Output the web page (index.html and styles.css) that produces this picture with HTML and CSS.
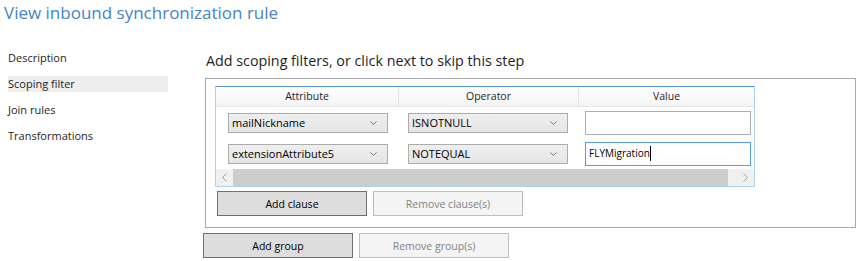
FILE: index.html
```html
<!DOCTYPE html>
<html lang="en">
<head>
  <meta charset="UTF-8">
  <title>View inbound synchronization rule</title>
  <link rel="stylesheet" href="styles.css">
</head>
<body>
  <h1 class="title">View inbound synchronization rule</h1>
  <div class="wizard">
    <ul class="steps">
      <li>Description</li>
      <li class="active">Scoping filter</li>
      <li>Join rules</li>
      <li>Transformations</li>
    </ul>
    <div class="page">
      <h2 class="page-heading">Add scoping filters, or click next to skip this step</h2>
      <div class="group-box">
        <div class="grid">
          <div class="grid-head">
            <div class="cell">Attribute</div>
            <div class="cell">Operator</div>
            <div class="cell">Value</div>
          </div>
          <div class="grid-row">
            <div class="cell cell-attr">
              <div class="combo"><span>mailNickname</span><svg width="7" height="4" viewBox="0 0 7 4"><polyline points="0.5,0.5 3.5,3.5 6.5,0.5" fill="none" stroke="#777" stroke-width="1"/></svg></div>
            </div>
            <div class="cell cell-op">
              <div class="combo"><span>ISNOTNULL</span><svg width="7" height="4" viewBox="0 0 7 4"><polyline points="0.5,0.5 3.5,3.5 6.5,0.5" fill="none" stroke="#777" stroke-width="1"/></svg></div>
            </div>
            <div class="cell cell-val">
              <div class="textbox"></div>
            </div>
          </div>
          <div class="grid-row">
            <div class="cell cell-attr">
              <div class="combo"><span>extensionAttribute5</span><svg width="7" height="4" viewBox="0 0 7 4"><polyline points="0.5,0.5 3.5,3.5 6.5,0.5" fill="none" stroke="#777" stroke-width="1"/></svg></div>
            </div>
            <div class="cell cell-op">
              <div class="combo"><span>NOTEQUAL</span><svg width="7" height="4" viewBox="0 0 7 4"><polyline points="0.5,0.5 3.5,3.5 6.5,0.5" fill="none" stroke="#777" stroke-width="1"/></svg></div>
            </div>
            <div class="cell cell-val">
              <div class="textbox focused"><span class="caret">FLYMigration</span></div>
            </div>
          </div>
          <div class="hscroll">
            <div class="scroll-btn"><svg width="5" height="9" viewBox="0 0 5 9"><polyline points="4.5,0.5 0.5,4.5 4.5,8.5" fill="none" stroke="#a0a0a0" stroke-width="1"/></svg></div>
            <div class="scroll-track"><div class="scroll-thumb"></div></div>
            <div class="scroll-btn"><svg width="5" height="9" viewBox="0 0 5 9"><polyline points="0.5,0.5 4.5,4.5 0.5,8.5" fill="none" stroke="#a0a0a0" stroke-width="1"/></svg></div>
          </div>
        </div>
        <div class="buttons">
          <button class="btn">Add clause</button>
          <button class="btn" disabled>Remove clause(s)</button>
        </div>
      </div>
      <div class="buttons outer-buttons">
        <button class="btn">Add group</button>
        <button class="btn" disabled>Remove group(s)</button>
      </div>
    </div>
  </div>
</body>
</html>
```

FILE: styles.css
```css
* {
  box-sizing: border-box;
}

body {
  margin: 0;
  font-family: "Open Sans", "Noto Sans", sans-serif;
  font-size: 11px;
  color: #1e1e1e;
  background: #fff;
}

.title {
  margin: 0;
  padding-left: 4px;
  font-size: 17px;
  font-weight: normal;
  line-height: 26px;
  color: #4783c5;
}

.wizard {
  display: flex;
  padding-top: 24px;
}

.steps {
  margin: 0;
  padding: 0 0 0 8px;
  width: 203px;
  flex-shrink: 0;
  list-style: none;
  display: flex;
  flex-direction: column;
  gap: 10px;
}

.steps li {
  width: 160px;
  height: 16px;
  line-height: 16px;
  font-size: 11px;
}

.steps li.active {
  background: #eeeeee;
}

.page {
  display: flex;
  flex-direction: column;
}

.page-heading {
  margin: 1px 0 7px 3px;
  font-size: 14.3px;
  font-weight: normal;
  line-height: 20px;
  color: #1e1e1e;
}

.group-box {
  margin-left: 2px;
  width: 651px;
  height: 150px;
  border: 1px solid #a9a9ad;
  padding: 7px 9px;
}

.grid {
  width: 540px;
  border: 1px solid #abd3ea;
  border-top-color: #5796d2;
}

.grid-head {
  display: flex;
  height: 20px;
  border-bottom: 1px solid #e6e6e6;
  background: linear-gradient(#ffffff, #f4f4f4);
  font-size: 10.5px;
}

.grid-head .cell {
  justify-content: center;
  border-right: 1px solid #e2e2e2;
  line-height: 19px;
}

.grid-head .cell:last-child {
  border-right: none;
}

.cell {
  display: flex;
  align-items: center;
}

.cell:nth-child(1) {
  width: 183px;
}

.cell:nth-child(2) {
  width: 180px;
}

.cell:nth-child(3) {
  flex: 1;
}

.grid-row {
  display: flex;
  height: 31px;
}

.cell-attr {
  padding-left: 12px;
}

.cell-op {
  padding-left: 9px;
}

.cell-val {
  padding-left: 6px;
}

.combo {
  width: 160px;
  height: 20px;
  border: 1px solid #acacac;
  background: linear-gradient(#efefef, #e5e5e5);
  display: flex;
  align-items: center;
  justify-content: space-between;
  padding: 0 10px 0 3px;
  color: #000;
}

.textbox {
  width: 166px;
  height: 24px;
  border: 1px solid #abadb3;
  background: #fff;
  padding: 0 3px;
  display: flex;
  align-items: center;
  font-size: 10px;
  color: #000;
}

.textbox.focused {
  border-color: #569de5;
}

.caret {
  border-right: 1px solid #000;
  line-height: 15px;
}

.hscroll {
  display: flex;
  height: 17px;
  background: #f0f0f0;
}

.scroll-btn {
  width: 17px;
  display: flex;
  align-items: center;
  justify-content: center;
}

.scroll-track {
  flex: 1;
  padding-right: 9px;
}

.scroll-thumb {
  height: 100%;
  background: #cdcdcd;
}

.buttons {
  display: flex;
  gap: 6px;
  margin-top: 4px;
  padding-left: 2px;
}

.btn {
  width: 150px;
  height: 25px;
  border: 1px solid #707070;
  background: #dddddd;
  font-family: inherit;
  font-size: 10.5px;
  color: #000;
  padding: 0;
}

.btn:disabled {
  border-color: #bfbfbf;
  background: #f4f4f4;
  color: #838383;
}

.outer-buttons {
  margin-top: 5px;
  padding-left: 0;
}
```
